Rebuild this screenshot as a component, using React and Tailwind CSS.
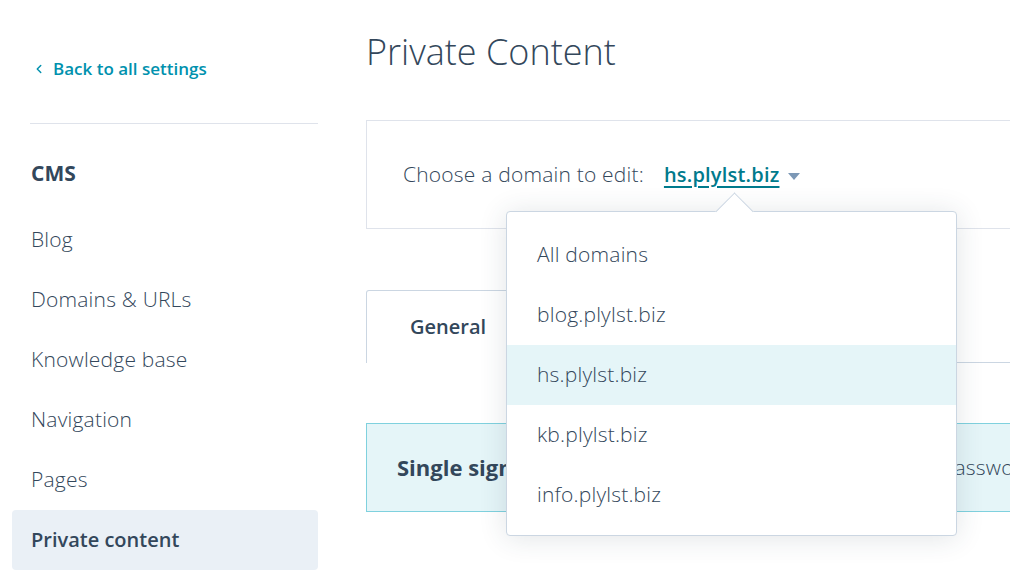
import { ChevronLeft } from 'lucide-react'

const NAV_ITEMS = ['Blog', 'Domains & URLs', 'Knowledge base', 'Navigation', 'Pages', 'Private content']
const DOMAINS = ['All domains', 'blog.plylst.biz', 'hs.plylst.biz', 'kb.plylst.biz', 'info.plylst.biz']

const FONT = { fontFamily: '"Open Sans", "Noto Sans", sans-serif' }

function Sidebar() {
  return (
    <aside className="w-[318px] shrink-0 pl-[12px]">
      <a className="mt-[57px] ml-[19px] flex h-[24px] items-center text-[17px] font-semibold text-[#0091ae]">
        <ChevronLeft size={14} strokeWidth={2.5} className="ml-[1px] mr-[7px]" />
        Back to all settings
      </a>
      <div className="ml-[18px] mt-[42px] h-px bg-[#dfe3eb]" />
      <h2 className="ml-[19px] mt-[35px] h-[28px] text-[21px] font-bold leading-[28px] text-[#33475b]">CMS</h2>
      <nav className="mt-[23px] flex flex-col">
        {NAV_ITEMS.map((item) => {
          const active = item === 'Private content'
          return (
            <div
              key={item}
              className={[
                'flex h-[60px] items-center rounded-[4px] px-[19px] text-[#33475b]',
                active ? 'bg-[#eaf0f6] text-[20px] font-semibold' : 'text-[21px] font-light tracking-[0.2px]',
              ].join(' ')}
            >
              {item}
            </div>
          )
        })}
      </nav>
    </aside>
  )
}

function DomainMenu() {
  return (
    <div className="absolute left-[140px] top-[211px] w-[451px] rounded-[4px] border border-[#cbd6e2] bg-white pt-[13px] pb-[10px] shadow-[0_2px_28px_0_rgba(45,62,80,0.14)]">
      {/* pointer */}
      <div className="absolute -top-[14px] left-[214px] h-[27px] w-[27px] rotate-45 border-l border-t border-[#cbd6e2] bg-white" />
      {DOMAINS.map((d) => (
        <div
          key={d}
          className={[
            'relative flex h-[60px] items-center px-[30px] text-[21px] font-light tracking-[0.2px] text-[#33475b]',
            d === 'hs.plylst.biz' ? 'bg-[#e5f5f8]' : '',
          ].join(' ')}
        >
          {d}
        </div>
      ))}
    </div>
  )
}

export default function App() {
  return (
    <div className="flex h-[578px] w-[1010px] overflow-hidden bg-white" style={FONT}>
      <Sidebar />
      <main className="relative ml-[48px] w-[760px] shrink-0">
        <h1 className="mt-[29px] h-[46px] text-[36px] font-light leading-[46px] text-[#33475b]">Private Content</h1>

        <section className="mt-[45px] flex h-[109px] items-center border border-[#dfe3eb] pl-[36px]">
          <span className="text-[21px] font-light tracking-[0.2px] text-[#33475b]">Choose a domain to edit:</span>
          <button type="button" className="ml-[20px] flex items-center">
            <span className="text-[20px] font-semibold tracking-[0.2px] text-[#007a8c] underline decoration-[1.5px] underline-offset-[4px]">
              hs.plylst.biz
            </span>
            <svg width="12" height="7" viewBox="0 0 12 7" className="ml-[9px] mt-[3px]">
              <path d="M0 0h12L6 7z" fill="#7c98b6" />
            </svg>
          </button>
        </section>

        <div className="mt-[61px] flex h-[73px]">
          <div className="flex w-[160px] items-center rounded-t-[3px] border-l border-r border-t border-[#cbd6e2] pl-[43px] text-[20px] font-semibold text-[#33475b]">
            General
          </div>
          <div className="flex-1 border-b border-[#cbd6e2]" />
        </div>

        <div className="mt-[60px] flex h-[89px] items-center border border-[#7fd1de] bg-[#e5f5f8] pl-[30px]">
          <span className="text-[22px] font-bold text-[#33475b]">Single sign-on</span>
          <span className="ml-[394px] whitespace-nowrap text-[21px] font-light tracking-[0.2px] text-[#33475b]">password</span>
        </div>

        <DomainMenu />
      </main>
    </div>
  )
}
